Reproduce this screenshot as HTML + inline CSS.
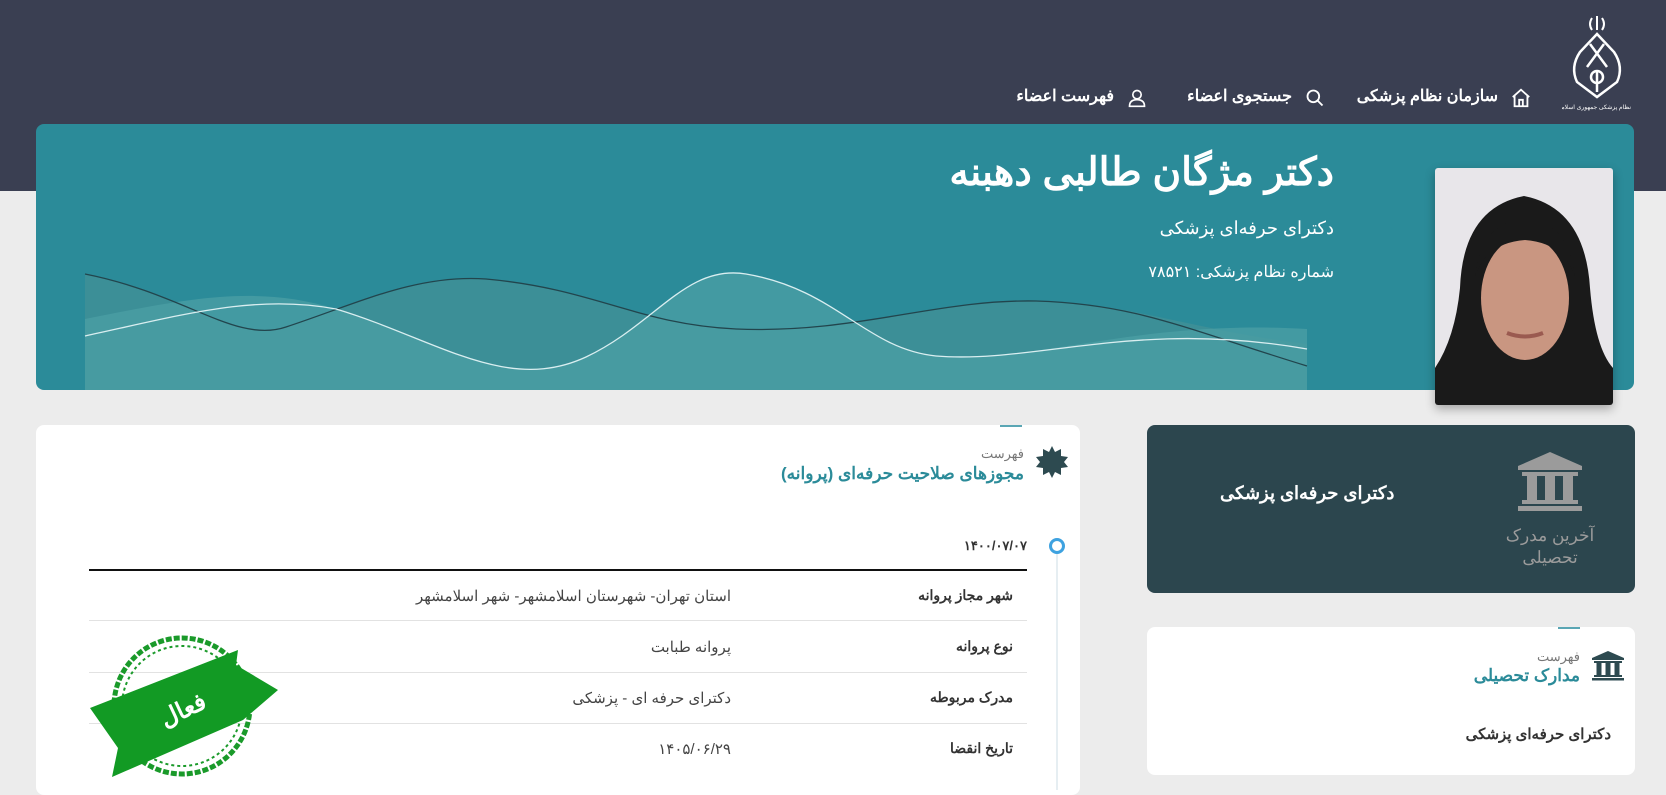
<!DOCTYPE html>
<html><head><meta charset="utf-8">
<style>
*{margin:0;padding:0;box-sizing:border-box}
body{width:1666px;height:783px;overflow:hidden;background:#ececec;font-family:"Liberation Sans","Noto Sans CJK SC",sans-serif;direction:rtl;position:relative}
.a{position:absolute;white-space:nowrap}
.hdr{left:0;top:0;width:1666px;height:191px;background:#3a3f52}
.nav{top:86px;color:#fff;font-size:16px;font-weight:bold}
.banner{left:36px;top:124px;width:1598px;height:266px;background:#2b8b99;border-radius:8px;overflow:hidden}
.card{background:#fff;border-radius:8px}
.lbl{font-size:14px;font-weight:bold;color:#333}
.val{font-size:15px;color:#444}
.sep{left:89px;width:938px;height:1px;background:#e2e2e2}
</style></head><body>
<div class="a hdr"></div>
<svg class="a" style="left:1562px;top:12px" width="70" height="100" viewBox="0 0 70 100">
<g fill="none" stroke="#fff" stroke-width="2.5">
<path d="M35 22 L18 40 Q8 55 15 70 L35 85 L55 70 Q62 55 52 40 Z"/>
<path d="M28 32 L45 55 M42 32 L25 55"/>
<circle cx="35" cy="65" r="6"/>
<path d="M35 58 V80"/>
</g>
<path d="M30 6 q-4 6 0 12 M35 4 V18 M40 6 q4 6 0 12" stroke="#fff" stroke-width="2" fill="none"/>
<text x="35" y="97" fill="#fff" font-size="6" text-anchor="middle">سازمان نظام پزشکی جمهوری اسلامی ایران</text>
</svg>
<svg class="a" style="left:1510px;top:87px" width="22" height="22" viewBox="0 0 24 24" fill="none" stroke="#fff" stroke-width="2"><path d="M3 11 L12 3 L21 11 M5 9 V21 H19 V9 M10 21 V14 H14 V21"/></svg>
<div class="a nav" style="right:168px">سازمان نظام پزشکی</div>
<svg class="a" style="left:1305px;top:88px" width="20" height="20" viewBox="0 0 24 24" fill="none" stroke="#fff" stroke-width="2.2"><circle cx="10" cy="10" r="7"/><path d="M15 15 L21 21"/></svg>
<div class="a nav" style="right:374px">جستجوی اعضاء</div>
<svg class="a" style="left:1127px;top:87px" width="20" height="22" viewBox="0 0 24 24" fill="none" stroke="#fff" stroke-width="2"><circle cx="12" cy="8" r="5"/><path d="M3 22 Q3 14 12 14 Q21 14 21 22 Z"/></svg>
<div class="a nav" style="right:552px">فهرست اعضاء</div>

<div class="a banner">
<svg width="1598" height="266" style="position:absolute;left:0;top:0">
<path d="M49 150 C150 170,200 220,250 203 C320 180,380 150,450 155 C560 165,600 200,700 205 C820 210,900 175,1000 177 C1100 180,1150 205,1271 220 V266 H49 Z" fill="#3f8f96" opacity="0.85"/>
<path d="M49 195 C150 175,220 160,300 185 C400 215,470 270,550 233 C620 200,650 140,710 150 C800 165,830 225,900 232 C1000 240,1100 195,1271 205 V266 H49 Z" fill="#4a9da4" opacity="0.8"/>
<path d="M49 150 C150 170,200 220,250 203 C320 180,380 150,450 155 C560 165,600 200,700 205 C820 210,900 175,1000 177 C1100 180,1150 205,1271 242" fill="none" stroke="#22454d" stroke-width="1.3"/>
<path d="M49 212 C150 190,220 170,300 185 C400 215,470 270,550 233 C620 200,650 140,710 150 C800 165,830 225,900 232 C1000 240,1100 195,1271 225" fill="none" stroke="#d9eef0" stroke-width="1.3"/>
</svg>
</div>
<div class="a" style="right:332px;top:150px;color:#fff;font-size:39px;font-weight:bold">دکتر مژگان طالبی دهبنه</div>
<div class="a" style="right:332px;top:218px;color:#fff;font-size:18px">دکترای حرفه‌ای پزشکی</div>
<div class="a" style="right:332px;top:262px;color:#fff;font-size:16px">شماره نظام پزشکی: ۷۸۵۲۱</div>
<svg class="a" style="left:1435px;top:168px;border-radius:3px;box-shadow:0 4px 10px rgba(0,0,0,.3)" width="178" height="237" viewBox="0 0 178 237">
<rect width="178" height="237" fill="#e8e6ea"/>
<path d="M0 237 L0 200 Q20 170 25 120 Q28 40 89 28 Q150 40 155 120 Q160 180 178 200 V237 Z" fill="#1a1a1a"/>
<ellipse cx="90" cy="130" rx="44" ry="62" fill="#c99681"/>
<path d="M40 110 Q45 55 90 50 Q135 55 140 110 Q130 75 90 72 Q50 75 40 110Z" fill="#1a1a1a"/>
<path d="M72 165 Q90 172 108 165" stroke="#9a5a50" stroke-width="4" fill="none"/>
</svg>

<div class="a card" style="left:36px;top:425px;width:1044px;height:370px"></div>
<div class="a" style="left:1000px;top:425px;width:22px;height:2px;background:#5aa6b4"></div>
<svg class="a" style="left:1035px;top:445px" width="34" height="34" viewBox="0 0 34 34"><path d="M17 1 L20 7 L26 4 L26 11 L33 12 L29 17 L33 22 L26 23 L26 30 L20 27 L17 33 L14 27 L8 30 L8 23 L1 22 L5 17 L1 12 L8 11 L8 4 L14 7 Z" fill="#2d4a50"/></svg>
<div class="a" style="right:642px;top:446px;font-size:13px;color:#777">فهرست</div>
<div class="a" style="right:642px;top:464px;font-size:17px;color:#2b8b99;font-weight:bold">مجوزهای صلاحیت حرفه‌ای (پروانه)</div>
<div class="a" style="left:1056px;top:550px;width:2px;height:240px;background:#e6eef2"></div>
<div class="a" style="left:1049px;top:538px;width:16px;height:16px;border:3px solid #3ea2e0;border-radius:50%;background:#fff"></div>
<div class="a" style="right:639px;top:538px;font-size:13px;color:#333;font-weight:bold">۱۴۰۰/۰۷/۰۷</div>
<div class="a" style="left:89px;top:569px;width:938px;height:2px;background:#111"></div>
<div class="a lbl" style="right:653px;top:587px">شهر مجاز پروانه</div>
<div class="a val" style="right:935px;top:587px">استان تهران- شهرستان اسلامشهر- شهر اسلامشهر</div>
<div class="a sep" style="top:620px"></div>
<div class="a lbl" style="right:653px;top:638px">نوع پروانه</div>
<div class="a val" style="right:935px;top:638px">پروانه طبابت</div>
<div class="a sep" style="top:672px"></div>
<div class="a lbl" style="right:653px;top:689px">مدرک مربوطه</div>
<div class="a val" style="right:935px;top:689px">دکترای حرفه ای - پزشکی</div>
<div class="a sep" style="top:723px"></div>
<div class="a lbl" style="right:653px;top:740px">تاریخ انقضا</div>
<div class="a val" style="right:935px;top:740px">۱۴۰۵/۰۶/۲۹</div>
<svg class="a" style="left:88px;top:630px" width="190" height="150" viewBox="0 0 190 150">
<circle cx="94" cy="76" r="68" fill="none" stroke="#1a9a2a" stroke-width="5" stroke-dasharray="6 2"/>
<circle cx="94" cy="76" r="60" fill="none" stroke="#1a9a2a" stroke-width="2" stroke-dasharray="3 3"/>
<path d="M2 78 L150 20 L148 35 L190 60 L155 90 L24 147 L30 118 Z" fill="#129a24"/>
<text x="95" y="88" fill="#fff" font-size="24" font-weight="bold" text-anchor="middle" transform="rotate(-25 95 80)">فعال</text>
</svg>

<div class="a" style="left:1147px;top:425px;width:488px;height:168px;background:#2c464e;border-radius:8px"></div>
<svg class="a" style="left:1518px;top:452px" width="64" height="60" viewBox="0 0 64 60"><g fill="#9b9b9b"><path d="M32 0 L64 14 V18 H0 V14 Z"/><rect x="4" y="20" width="56" height="4"/><rect x="9" y="24" width="10" height="24"/><rect x="27" y="24" width="10" height="24"/><rect x="45" y="24" width="10" height="24"/><rect x="4" y="48" width="56" height="4"/><rect x="0" y="54" width="64" height="5"/></g></svg>
<div class="a" style="left:1500px;width:100px;top:525px;text-align:center;font-size:17px;color:#9b9b9b;line-height:22px;white-space:normal">آخرین مدرک تحصیلی</div>
<div class="a" style="left:1220px;top:483px;font-size:18px;color:#fff;font-weight:bold">دکترای حرفه‌ای پزشکی</div>

<div class="a card" style="left:1147px;top:627px;width:488px;height:148px"></div>
<div class="a" style="left:1558px;top:627px;width:22px;height:2px;background:#5aa6b4"></div>
<svg class="a" style="left:1592px;top:651px" width="32" height="30" viewBox="0 0 64 60"><g fill="#2d4a50"><path d="M32 0 L64 14 V18 H0 V14 Z"/><rect x="4" y="20" width="56" height="4"/><rect x="9" y="24" width="10" height="24"/><rect x="27" y="24" width="10" height="24"/><rect x="45" y="24" width="10" height="24"/><rect x="4" y="48" width="56" height="4"/><rect x="0" y="54" width="64" height="5"/></g></svg>
<div class="a" style="right:86px;top:649px;font-size:13px;color:#777">فهرست</div>
<div class="a" style="right:86px;top:666px;font-size:17px;color:#2b8b99;font-weight:bold">مدارک تحصیلی</div>
<div class="a" style="right:55px;top:725px;font-size:15px;color:#333;font-weight:bold">دکترای حرفه‌ای پزشکی</div>
</body></html>
